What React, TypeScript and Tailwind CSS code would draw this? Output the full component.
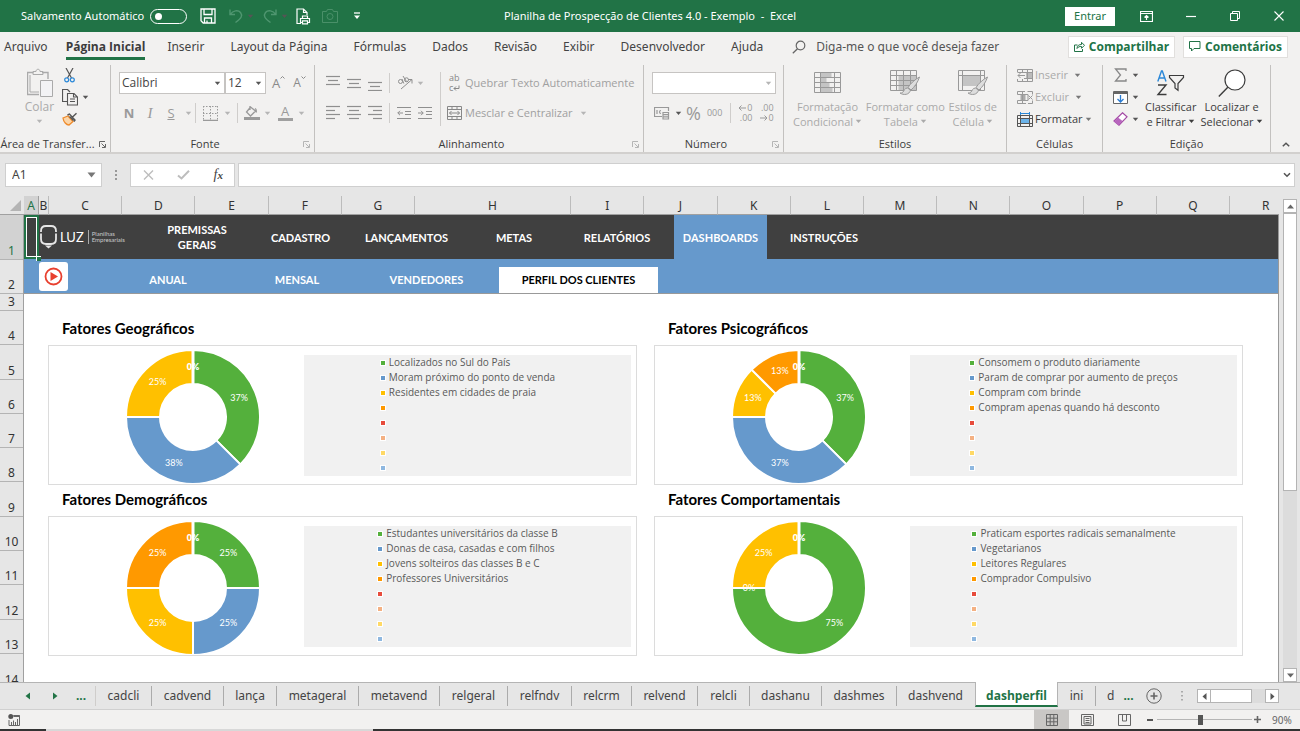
import React from 'react';

type Kids = { children?: React.ReactNode };

function Caret({ className = 'text-[#555]' }: { className?: string }) {
  return (
    <svg className={`shrink-0 ${className}`} width="7" height="5" viewBox="0 0 7 5" aria-hidden="true">
      <path d="M0.8 0.8h5.4L3.5 4z" fill="currentColor" />
    </svg>
  );
}

function Svg({ w, h, box, children, className = '' }: Kids & { w: number; h: number; box?: string; className?: string }) {
  return (
    <svg
      width={w}
      height={h}
      viewBox={box ?? `0 0 ${w} ${h}`}
      fill="none"
      stroke="currentColor"
      strokeWidth="1"
      className={`shrink-0 ${className}`}
      aria-hidden="true"
    >
      {children}
    </svg>
  );
}

/* ---------- title bar ---------- */

function TitleBar() {
  return (
    <header className="grid h-8 shrink-0 grid-cols-[1fr_auto_1fr] items-center bg-[#217346] text-white">
      <div className="flex items-center pl-[21px]">
        <label htmlFor="autosave" className="whitespace-nowrap text-[11px] leading-4">Salvamento Automático</label>
        <input id="autosave" type="checkbox" role="switch" className="peer sr-only" />
        <label htmlFor="autosave" className="ml-[6px] flex h-[15px] w-[37px] items-center rounded-full border border-white px-[4px]">
          <span className="size-[7px] rounded-full bg-white" />
        </label>
        <button aria-label="Salvar" className="ml-[13px]">
          <Svg w={16} h={16}>
            <path d="M1 1h14v14H3.2L1 12.8zM4 1v5.5h8V1M4.5 15v-5h7v5M7 12.5V15" strokeWidth="1.3" />
          </Svg>
        </button>
        <button aria-label="Desfazer" className="ml-[12px] flex items-center gap-[3px] text-[#4f9670]">
          <Svg w={16} h={16}>
            <path d="M2 1.5v5h5M2.3 6.3C5 2.5 10 1.6 12.5 4.5c2.6 3.3.6 6-5 10" strokeWidth="1.4" />
          </Svg>
          <Caret />
        </button>
        <button aria-label="Refazer" className="ml-[8px] flex items-center gap-[3px] text-[#4f9670]">
          <Svg w={16} h={16}>
            <path d="M14 1.5v5H9M13.7 6.3C11 2.5 6 1.6 3.5 4.5.9 7.8 2.900 10.500 8.500 14.500" strokeWidth="1.4" />
          </Svg>
          <Caret />
        </button>
        <button aria-label="Visualizar impressão" className="ml-[8px]">
          <Svg w={15} h={17}>
            <path d="M5 15.500H1V1h6.500L11 4.500V7M7.500 1v3.500H11" strokeWidth="1.2" />
            <path d="M6.500 10.500V8h5v2.500M6 14.500H4.500v-4h9v4H12M6.500 12.800h5v3h-5z" strokeWidth="1.2" />
          </Svg>
        </button>
        <button aria-label="Câmera" className="ml-[11px] text-[#4a9069]">
          <Svg w={16} h={14}>
            <path d="M.500 2.500h4l1-2h5l1 2h4v11H.500z" />
            <circle cx="8" cy="7.500" r="3" />
          </Svg>
        </button>
        <button aria-label="Personalizar barra" className="ml-[15px]">
          <Svg w={8} h={8}><path d="M1 1h6" strokeWidth="1.3" /><path d="M1 3.500h6L4 7z" fill="currentColor" stroke="none" /></Svg>
        </button>
      </div>
      <h1 className="whitespace-pre text-[11px] leading-4">Planilha de Prospecção de Clientes 4.0 - Exemplo  -  Excel</h1>
      <div className="flex items-center justify-end pr-[16px]">
        <button className="h-[19px] w-[50px] bg-white text-[11px] leading-4 text-[#217346]">Entrar</button>
        <button aria-label="Opções da faixa" className="ml-[25px]">
          <Svg w={13} h={11}><path d="M.500.500h12v10H.500zM.500 2.500h12M6.500 9V4.500M4.500 6.500l2-2 2 2" strokeWidth="1.2" /></Svg>
        </button>
        <button aria-label="Minimizar" className="ml-[33px]"><Svg w={10} h={10}><path d="M0 5.500h10" strokeWidth="1.2" /></Svg></button>
        <button aria-label="Restaurar" className="ml-[34px]"><Svg w={10} h={10}><path d="M.500 2.500h7v7h-7zM2.500 2.500v-2h7v7h-2" /></Svg></button>
        <button aria-label="Fechar" className="ml-[34px]"><Svg w={10} h={10}><path d="M.500.500l9 9M9.500.500l-9 9" strokeWidth="1.1" /></Svg></button>
      </div>
    </header>
  );
}

/* ---------- ribbon tabs ---------- */

const menuTabs = ['Arquivo', 'Página Inicial', 'Inserir', 'Layout da Página', 'Fórmulas', 'Dados', 'Revisão', 'Exibir', 'Desenvolvedor', 'Ajuda'];

function MenuRow() {
  return (
    <div className="flex h-[29px] shrink-0 items-center justify-between pl-1 pr-3 text-[12px] leading-4 text-[#444]">
      <nav className="flex items-center gap-[26px] whitespace-nowrap">
        {menuTabs.map((t) =>
          t === 'Página Inicial' ? (
            <button key={t} className="-ml-2 -mr-1 mt-[5px] border-b-[3px] border-[#217346] pb-[2px] font-['Open_Sans',sans-serif] font-bold text-[#3c3c3c]">{t}</button>
          ) : (
            <button key={t}>{t}</button>
          ),
        )}
        <label className="ml-[3px] flex items-center gap-[10px]">
          <Svg w={14} h={14} className="text-[#666]"><circle cx="8.500" cy="5.500" r="4.300" strokeWidth="1.200" /><path d="M5.500 8.700L.800 13.200" strokeWidth="1.300" /></Svg>
          <input className="w-[190px] bg-transparent outline-none placeholder:text-[#555] placeholder:opacity-100" placeholder="Diga-me o que você deseja fazer" aria-label="Diga-me o que você deseja fazer" />
        </label>
      </nav>
      <div className="flex gap-2 font-['Open_Sans',sans-serif] font-bold text-[#217346]">
        <button className="flex h-[22px] w-[107px] items-center justify-center gap-[4px] border border-[#e1dfdd] bg-white">
          <Svg w={11} h={11}><path d="M3.500 4H.500v6.500h8V8M3 7.500c0-3 2-4 4.500-4V1.300l3 3-3 3V5.500C5.500 5.300 4 6 3 7.500z" /></Svg>
          Compartilhar
        </button>
        <button className="flex h-[22px] w-[105px] items-center justify-center gap-[4px] border border-[#e1dfdd] bg-white">
          <Svg w={12} h={11}><path d="M.500.500h10.500v7H5L2.500 10V7.500h-2z" /></Svg>
          Comentários
        </button>
      </div>
    </div>
  );
}

/* ---------- ribbon ---------- */

function Group({ label, width, launcher, faded, children }: Kids & { label: string; width: string; launcher?: boolean; faded?: boolean }) {
  return (
    <section className={`flex shrink-0 flex-col ${width}`} aria-label={label}>
      <div className="flex h-[87px] flex-col border-r border-[#c3c1bf]">
        <div className="h-[71px]">{children}</div>
        <div className={launcher ? 'flex items-center pr-1' : 'flex items-center'}>
          <span className="flex-1 whitespace-nowrap text-center text-[11px] leading-4 text-[#3c3c3c]">{label}</span>
          {launcher && (
            <button aria-label={`Mais opções: ${label}`} className={faded ? 'pl-1 text-[#b5b5b5]' : 'pl-1 text-[#666]'}>
              <Svg w={7} h={7}><path d="M.500 6V.500H6M2.500 2.500l3.500 3.500M6.500 3v3.500H3" /></Svg>
            </button>
          )}
        </div>
      </div>
    </section>
  );
}

function Sep({ className = 'h-[20px]' }: { className?: string }) {
  return <span className={`w-px shrink-0 bg-[#cfcdcb] ${className}`} />;
}

function Drop({ label, value, width, caret }: { label: string; value: string; width: string; caret?: string }) {
  return (
    <span className={`grid h-[22px] items-center border border-[#c6c4c2] bg-white ${width}`}>
      <select aria-label={label} className="col-start-1 row-start-1 h-5 appearance-none pl-[2px] text-[12px] leading-4 text-[#444] outline-none">
        <option>{value}</option>
      </select>
      <span className="pointer-events-none col-start-1 row-start-1 mr-[3px] justify-self-end"><Caret className={caret} /></span>
    </span>
  );
}

function Lines({ rows, name }: { rows: [number, number, number][]; name: string }) {
  return (
    <button aria-label={name}>
      <Svg w={14} h={16} className="text-[#8f8f8f]">
        {rows.map(([y, a, b]) => <path key={y} d={`M${a} ${y}.5H${b}`} strokeWidth="1.200" />)}
      </Svg>
    </button>
  );
}

function FontGroup() {
  return (
    <Group label="Fonte" width="w-[204px]" launcher faded>
      <div className="flex flex-col gap-[8px] pl-[8px] pt-[7px]">
        <div className="flex items-center">
          <Drop label="Fonte" value="Calibri" width="w-[106px]" />
          <Drop label="Tamanho" value="12" width="w-[41px]" />
          <button aria-label="Aumentar fonte" className="ml-[6px] flex items-start text-[13px] leading-4 text-[#8a8a8a]">A<Svg w={5} h={5}><path d="M.500 3.500l2-2 2 2" /></Svg></button>
          <button aria-label="Diminuir fonte" className="ml-[8px] flex items-start text-[12px] leading-4 text-[#8a8a8a]">A<Svg w={5} h={5}><path d="M.500 1.500l2 2 2-2" /></Svg></button>
        </div>
        <div className="flex h-[22px] items-center text-[#9a9a9a]">
          <button className="w-[20px] text-[13px] font-bold leading-4">N</button>
          <button className="w-[22px] font-['Liberation_Serif',serif] text-[15px] italic leading-4">I</button>
          <button className="w-[20px] text-[13px] leading-4 underline">S</button>
          <span className="w-[14px] pl-1"><Caret className="text-[#b5b5b5]" /></span>
          <Sep />
          <button aria-label="Bordas" className="ml-[7px]">
            <Svg w={15} h={15}><path d="M.500 0v14M7.500 0v14M14.500 0v14M0 .500h15M0 7.500h15" strokeDasharray="1.500 1.500" /><path d="M0 14.500h15" strokeWidth="1.500" /></Svg>
          </button>
          <span className="ml-[6px] mr-[6px]"><Caret className="text-[#b5b5b5]" /></span>
          <Sep />
          <button aria-label="Cor de preenchimento" className="ml-[6px]">
            <Svg w={16} h={16}><path d="M7 1.500L2.500 7l4 4 5-5L6.500 2M6 1v4M12.500 7.500c-.700-2 .500-3-1.500-4" strokeWidth="1.300" /><path d="M0 13.500h16" strokeWidth="3" /></Svg>
          </button>
          <span className="ml-[4px]"><Caret className="text-[#b5b5b5]" /></span>
          <button aria-label="Cor da fonte" className="ml-[6px] flex w-[16px] flex-col items-center">
            <span className="text-[13px] leading-[13px]">A</span>
            <span className="h-[3px] w-[15px] bg-[#a0a0a0]" />
          </button>
          <span className="ml-[5px]"><Caret className="text-[#b5b5b5]" /></span>
        </div>
      </div>
    </Group>
  );
}

function AlignGroup() {
  return (
    <Group label="Alinhamento" width="w-[329px]" launcher faded>
      <div className="flex pt-[7px]">
        <div className="flex flex-col gap-[8px] pl-[11px] text-[#8f8f8f]">
          <div className="flex h-[22px] items-center gap-[7px]">
            <Lines name="Alinhar em cima" rows={[[1, 0, 14], [5, 2, 12], [9, 0, 14]]} />
            <Lines name="Alinhar no meio" rows={[[4, 0, 14], [8, 2, 12], [12, 0, 14]]} />
            <Lines name="Alinhar embaixo" rows={[[7, 0, 14], [11, 2, 12], [15, 0, 14]]} />
            <Sep />
            <button aria-label="Orientação" className="flex items-center gap-[3px]">
              <svg width="17" height="16" viewBox="0 0 17 16" fill="none" stroke="currentColor" aria-hidden="true">
                <circle cx="3.500" cy="6.500" r="2" /><path d="M5 4l1.800 4.500M6 1l3.500 5.500M4 14L15 4.500M11 4.500h4v4" /><circle cx="9.500" cy="4.800" r="2" />
              </svg>
              <Caret className="text-[#b5b5b5]" />
            </button>
          </div>
          <div className="flex h-[22px] items-center gap-[7px]">
            <Lines name="Alinhar à esquerda" rows={[[1, 0, 14], [5, 0, 9], [9, 0, 14], [13, 0, 9]]} />
            <Lines name="Centralizar" rows={[[1, 0, 14], [5, 2, 12], [9, 0, 14], [13, 2, 12]]} />
            <Lines name="Alinhar à direita" rows={[[1, 0, 14], [5, 5, 14], [9, 0, 14], [13, 5, 14]]} />
            <Sep />
            <button aria-label="Diminuir recuo"><Svg w={14} h={14}><path d="M0 1.500h14M8 5.500h6M8 8.500h6M0 12.500h14M6 7H.800M3 4.800L.800 7 3 9.200" /></Svg></button>
            <button aria-label="Aumentar recuo"><Svg w={14} h={14}><path d="M0 1.500h14M8 5.500h6M8 8.500h6M0 12.500h14M0 7h5.200M3 4.800L5.200 7 3 9.200" /></Svg></button>
          </div>
        </div>
        <Sep className="ml-[8px] h-[54px]" />
        <div className="flex flex-col gap-[8px] pl-[6px] text-[11px] leading-4 text-[#a0a0a0]">
          <button className="flex h-[22px] items-center gap-[2px] whitespace-nowrap">
            <span className="flex w-[16px] flex-col pl-[2px] text-left text-[9px] leading-[10px] text-[#888]">
              <span>ab</span>
              <span className="flex items-center">c<Svg w={7} h={6}><path d="M6 .500v3H1M3 1.500l-2 2 2 2" /></Svg></span>
            </span>
            Quebrar Texto Automaticamente
          </button>
          <button className="flex h-[22px] items-center gap-[3px] whitespace-nowrap">
            <Svg w={15} h={14} className="text-[#888]"><path d="M.500.500h14v13H.500zM.500 3.500h14M.500 10.500h14M5 .500v3M10 .500v3M5 10.500v3M10 10.500v3M2.500 7h10M4.500 5l-2 2 2 2M10.500 5l2 2-2 2" /></Svg>
            Mesclar e Centralizar
            <span className="ml-[4px]"><Caret className="text-[#b5b5b5]" /></span>
          </button>
        </div>
      </div>
    </Group>
  );
}

function NumberGroup() {
  return (
    <Group label="Número" width="w-[140px]" launcher faded>
      <div className="flex flex-col gap-[8px] pl-[8px] pr-[7px] pt-[7px]">
        <Drop label="Formato de número" value="" width="w-full" caret="text-[#b5b5b5]" />
        <div className="flex h-[22px] items-center text-[#999]">
          <button aria-label="Formato de contabilização" className="ml-[2px] flex items-center gap-[5px]">
            <Svg w={16} h={13}><path d="M8 9.500H.500V.500h14V4M3 3v4M7 3.500a1.500 1.500 0 100 3M9 5.500h5.500v6.500H9zM9 7.700h5.500M9 9.800h5.500" strokeWidth="1.200" /></Svg>
            <Caret />
          </button>
          <button className="ml-[4px] text-[18px] leading-5">%</button>
          <button className="ml-[6px] text-[9px] leading-4">000</button>
          <span className="ml-[8px]"><Sep className="block h-[20px]" /></span>
          <button aria-label="Aumentar casas decimais" className="ml-[7px] flex flex-col items-end text-[9px] leading-[10px]">
            <span className="flex items-center gap-px"><Svg w={8} h={6}><path d="M8 3H1M3.500.500L1 3l2.500 2.500" /></Svg>0</span>
            <span>.00</span>
          </button>
          <button aria-label="Diminuir casas decimais" className="ml-[7px] flex flex-col items-end text-[9px] leading-[10px]">
            <span>.00</span>
            <span className="flex items-center gap-px"><Svg w={8} h={6}><path d="M0 3h7M4.500.500L7 3 4.500 5.500" /></Svg>0</span>
          </button>
        </div>
      </div>
    </Group>
  );
}

function BigButton({ icon, a, b, tone }: { icon: React.ReactNode; a: string; b: string; tone: string }) {
  return (
    <button className={`flex flex-col items-center whitespace-nowrap text-[11px] leading-[15px] ${tone}`}>
      <span className="flex h-[32px] items-center">{icon}</span>
      <span>{a}</span>
      <span className="flex items-center gap-[2px]">{b}<Caret className="text-current" /></span>
    </button>
  );
}

const gridPath = 'M.500.500h26v20H.500zM.500 5.500h26M.500 10.500h26M.500 15.500h26M6.500.500v20M20.500.500v20';
const brushPath = 'M29.500 7c-4 2-9 6.500-11.500 10.500l3 2.500c3.500-3 7-8 8.500-13zM17.500 18c-3 0-3.500 3-4.500 4-1 1-2 1-3 1 3.500 2.500 9.500 2 10.500-3z';

function StylesGroup() {
  return (
    <Group label="Estilos" width="w-[223px]">
      <div className="flex justify-between pl-[9px] pr-[9px] pt-[2px]">
        <BigButton tone="text-[#aaa]" a="Formatação" b="Condicional" icon={<Svg w={27} h={26} box="0 -2 27 26" className="text-[#999]"><path d="M6.500.500h11v5h-11zM6.500 10.500h9v5h-9z M6.500 5.500h6v5h-6zM6.500 15.500h12v5h-12z" fill="#c4c4c4" stroke="none" /><path d={gridPath} /></Svg>} />
        <BigButton tone="text-[#aaa]" a="Formatar como" b="Tabela" icon={<Svg w={30} h={26} className="text-[#999]"><path d="M8.500 5.500h18v15h-18z" fill="#c4c4c4" stroke="none" /><path d={gridPath} /><path d="M13.500.500v20" /><path d={brushPath} fill="#ddd" /></Svg>} />
        <BigButton tone="text-[#aaa]" a="Estilos de" b="Célula" icon={<Svg w={30} h={26} className="text-[#999]"><path d="M.500.500h26v20H.500zM.500 5.500h26M4.500.500v20M22.500.500v20" /><path d="M5 6h17v10H5z" fill="#c4c4c4" stroke="none" /><path d={brushPath} fill="#ddd" /></Svg>} />
      </div>
    </Group>
  );
}

function CellIcon({ kind }: { kind: 'in' | 'ex' | 'fm' }) {
  return (
    <Svg w={16} h={15} className={kind === 'fm' ? 'text-[#555]' : 'text-[#999]'}>
      {kind === 'in' && <><path d="M9 4.500h6v6H9z" fill="#bbb" stroke="none" /><path d="M.500 4V1.500h15v12H.500V11M5.500 1v3M10.500 1v12M.500 4.500h15M7 10.500h8.500M5.500 11v2.500M8 7.500H1M3.500 5L1 7.500 3.500 10" /></>}
      {kind === 'ex' && <><path d="M3.500 4.500h5v6h-5z" fill="#aaa" stroke="none" /><path d="M8 1.500H.500v3H11v6H.500v3H9M5.500 1.500v12M10.500 1.500h5v3M11 13.500h4.500v-3M11.500 5.500l4 4M15.500 5.500l-4 4" /></>}
      {kind === 'fm' && <><path d="M3.500 0v3M12.500 0v3M3.500 1.500h9" stroke="#2b88d8" /><path d="M4 7h8v5H4z" fill="#6cb4ea" stroke="none" /><path d="M.500 3.500h15v11H.500zM.500 6.500h15M.500 11.500h15M3.500 3.500v11M12.500 3.500v11" /></>}
    </Svg>
  );
}

function CellsGroup() {
  return (
    <Group label="Células" width="w-[96px]">
      <div className="flex flex-col gap-[6px] pl-[10px] pt-[2px] text-[11px] leading-4">
        <button className="flex items-center gap-[2px] text-[#aaa]"><CellIcon kind="in" />Inserir<span className="ml-[4px]"><Caret className="text-[#777]" /></span></button>
        <button className="flex items-center gap-[2px] text-[#aaa]"><CellIcon kind="ex" />Excluir<span className="ml-[4px]"><Caret className="text-[#777]" /></span></button>
        <button className="flex items-center gap-[2px] text-[#3c3c3c]"><CellIcon kind="fm" />Formatar<Caret className="text-[#777]" /></button>
      </div>
    </Group>
  );
}

function EditGroup() {
  return (
    <Group label="Edição" width="w-[168px]">
      <div className="flex pl-[10px] pt-[2px]">
        <div className="flex flex-col gap-[6px] text-[#666]">
          <button aria-label="Soma" className="flex h-4 items-center gap-[4px]"><Svg w={15} h={14} className="text-[#888]"><path d="M13 3V1H2.500l5 6-5 6H13v-2" strokeWidth="1.300" /></Svg><Caret /></button>
          <button aria-label="Preencher" className="flex h-4 items-center gap-[4px]"><Svg w={15} h={13}><path d="M.500.500h14v12H.500z" fill="#fff" /><path d="M.500 2h14" strokeWidth="2" /><path d="M7.500 4v6.500M4.500 8l3 3 3-3" stroke="#2b7cd3" strokeWidth="1.300" /></Svg><Caret /></button>
          <button aria-label="Limpar" className="flex h-4 items-center gap-[4px]"><Svg w={15} h={14}><path d="M9.500.800l4.500 4-8 8.400-5-4.200z" fill="#fff" stroke="#a349a4" strokeWidth="1.200" /><path d="M5 5.500L1 9.500l4.500 3.700 4-4.300z" fill="#b765bd" stroke="none" /></Svg><Caret /></button>
        </div>
        <div className="ml-[6px] flex gap-[4px]">
          <BigButton tone="text-[#3c3c3c]" a="Classificar" b="e Filtrar" icon={
            <span className="flex items-center">
              <Svg w={12} h={28}><path d="M1.800 12.500L5.500 2h.800L10 12.500M3.200 9h5.400" stroke="#2b88d8" strokeWidth="1.400" /><path d="M2 16h8L2 25.500h8.500" strokeWidth="1.400" /></Svg>
              <Svg w={17} h={18}><path d="M1.500 1.500h14v2L10 9.500v6.800L7 14V9.500l-5.500-6z" strokeWidth="1.200" /></Svg>
            </span>
          } />
          <BigButton tone="text-[#3c3c3c]" a="Localizar e" b="Selecionar" icon={<Svg w={28} h={29}><circle cx="17" cy="11" r="10" fill="#fff" strokeWidth="1.200" /><path d="M9.800 18.200L.800 27.500" strokeWidth="1.400" /></Svg>} />
        </div>
      </div>
    </Group>
  );
}

function Ribbon() {
  return (
    <div className="flex h-[91px] shrink-0 items-start pt-[4px] font-['Open_Sans',sans-serif]">
      <Group label="Área de Transfer..." width="w-[111px]" launcher>
        <div className="flex pl-[25px] pt-[3px]">
          <button className="flex w-[29px] flex-col items-center text-[12px] leading-4 text-[#aaa]">
            <Svg w={26} h={30} className="text-[#aaa]"><path d="M12 26.500H.500V4.500h6M15 4.500h6V11" strokeWidth="1.400" /><path d="M6 6.500v-3h3c0-3 4-3 4 0h3v3zM3 7v17h9" /><path d="M13.500 12.500h12v16h-12z" fill="#f3f3f5" /></Svg>
            <span className="mt-px">Colar</span>
            <span className="mt-[4px]"><Caret className="text-[#b5b5b5]" /></span>
          </button>
          <div className="ml-[8px] flex flex-col gap-[6px] text-[#555]">
            <button aria-label="Recortar" className="pl-[2px]"><Svg w={11} h={15}><path d="M2 0l5.500 10M9 0L3.500 10" strokeWidth="1.200" /><circle cx="2.700" cy="11.800" r="2" stroke="#2b88d8" strokeWidth="1.200" /><circle cx="8.300" cy="11.800" r="2" stroke="#2b88d8" strokeWidth="1.200" /></Svg></button>
            <button aria-label="Copiar" className="flex items-center gap-[4px]"><Svg w={16} h={17}><path d="M5 12.500H.500V.500h5L8 3" strokeWidth="1.200" /><path d="M5.500 4.500H12l3.500 3.500v8h-10zM11.500 4.500V8h4M8 10h5M8 12.500h5" strokeWidth="1.100" /></Svg><Caret /></button>
            <button aria-label="Pincel de formatação"><Svg w={16} h={14}><path d="M1 6l5-2 5 5.500L7 13C4.500 13 1.500 10 1 6z" fill="#fbd5a8" stroke="#ef8b2c" strokeWidth="1.300" /><path d="M7.500 4.500l4 4M9.500 6L14.500 1.300M5.500 3l2-1 5.500 6-1 1.500" strokeWidth="1.400" /></Svg></button>
          </div>
        </div>
      </Group>
      <FontGroup />
      <AlignGroup />
      <NumberGroup />
      <StylesGroup />
      <CellsGroup />
      <EditGroup />
      <button aria-label="Recolher faixa" className="mx-auto self-end pb-[5px] text-[#555]"><Svg w={8} h={5}><path d="M.800 4.300L4 1.200l3.200 3.100" strokeWidth="1.500" /></Svg></button>
    </div>
  );
}

function FormulaBar() {
  return (
    <div className="flex h-[44px] shrink-0 items-center border-t-2 border-[#d2d0ce] pb-[2px] pl-[5px] pr-[5px] pt-px">
      <label className="flex h-[24px] w-[97px] items-center border border-[#cfcfcf] bg-white pl-[6px] pr-[5px]">
        <input aria-label="Caixa de nome" defaultValue="A1" className="w-0 flex-1 text-[12px] leading-4 text-[#444] outline-none" />
        <svg width="9" height="6" viewBox="0 0 9 6" aria-hidden="true"><path d="M.500.500h8L4.500 5.500z" fill="#777" /></svg>
      </label>
      <svg className="mx-[12px]" width="4" height="12" viewBox="0 0 4 12" fill="#999" aria-hidden="true"><path d="M1 1h2v2H1zM1 5h2v2H1zM1 9h2v2H1z" /></svg>
      <div className="flex h-[24px] w-[105px] items-center justify-between border border-[#cfcfcf] bg-white pl-[12px] pr-[11px]">
        <button aria-label="Cancelar"><Svg w={11} h={10} className="text-[#bdbdbd]"><path d="M1 .500l9 9M10 .500l-9 9" strokeWidth="1.400" /></Svg></button>
        <button aria-label="Confirmar"><Svg w={13} h={10} className="text-[#bdbdbd]"><path d="M1 5.500l3.500 3L12 .800" strokeWidth="2" /></Svg></button>
        <button className="font-['Liberation_Serif',serif] text-[14px] italic leading-4 text-[#444]">f<span className="text-[11px] font-bold">x</span></button>
      </div>
      <label className="ml-[3px] flex h-[24px] flex-1 items-center border border-[#cfcfcf] bg-white pr-[3px]">
        <input aria-label="Barra de fórmulas" className="w-0 flex-1 outline-none" />
        <Svg w={8} h={6} className="text-[#555]"><path d="M1 1.200l3 3 3-3" strokeWidth="1.600" /></Svg>
      </label>
    </div>
  );
}

/* ---------- sheet ---------- */

const GREEN = '#54b03c';
const BLUE = '#6699cc';
const YELLOW = '#ffc000';
const ORANGE = '#ff9900';
const markerColors = ['bg-[#54b03c]', 'bg-[#6699cc]', 'bg-[#ffc000]', 'bg-[#ff9900]', 'bg-[#e74c3c]', 'bg-[#f4b183]', 'bg-[#ffd966]', 'bg-[#8fb8e0]'];

type Slice = { v: number; color: string; label: string };
type Chart = { title: string; slices: Slice[]; legend: string[] };

const charts: Chart[] = [
  {
    title: 'Fatores Geográficos',
    slices: [
      { v: 37.5, color: GREEN, label: '37%' },
      { v: 37.5, color: BLUE, label: '38%' },
      { v: 25, color: YELLOW, label: '25%' },
    ],
    legend: ['Localizados no Sul do País', 'Moram próximo do ponto de venda', 'Residentes em cidades de praia'],
  },
  {
    title: 'Fatores Psicográficos',
    slices: [
      { v: 37.5, color: GREEN, label: '37%' },
      { v: 37.5, color: BLUE, label: '37%' },
      { v: 12.5, color: YELLOW, label: '13%' },
      { v: 12.5, color: ORANGE, label: '13%' },
    ],
    legend: ['Consomem o produto diariamente', 'Param de comprar por aumento de preços', 'Compram com brinde', 'Compram apenas quando há desconto'],
  },
  {
    title: 'Fatores Demográficos',
    slices: [
      { v: 25, color: GREEN, label: '25%' },
      { v: 25, color: BLUE, label: '25%' },
      { v: 25, color: YELLOW, label: '25%' },
      { v: 25, color: ORANGE, label: '25%' },
    ],
    legend: ['Estudantes universitários da classe B', 'Donas de casa, casadas e com filhos', 'Jovens solteiros das classes B e C', 'Professores Universitários'],
  },
  {
    title: 'Fatores Comportamentais',
    slices: [
      { v: 75, color: GREEN, label: '75%' },
      { v: 0, color: BLUE, label: '0%' },
      { v: 25, color: YELLOW, label: '25%' },
    ],
    legend: ['Praticam esportes radicais semanalmente', 'Vegetarianos', 'Leitores Regulares', 'Comprador Compulsivo'],
  },
];

function Donut({ slices }: { slices: Slice[] }) {
  const C = 67;
  const R = 67;
  const r = 33;
  const at = (pct: number, rad: number) => {
    const a = (pct / 100) * 2 * Math.PI;
    return [C + rad * Math.sin(a), C - rad * Math.cos(a)];
  };
  let start = 0;
  const parts = slices.map((s) => {
    const from = start;
    start += s.v;
    return { ...s, from, to: start };
  });
  return (
    <svg width="134" height="134" viewBox="0 0 134 134" role="img" className="shrink-0 self-end">
      {parts.map((p, i) => {
        const [x1, y1] = at(p.from, R);
        const [x2, y2] = at(p.to, R);
        const [x3, y3] = at(p.to, r);
        const [x4, y4] = at(p.from, r);
        const big = p.v > 50 ? 1 : 0;
        return (
          <path
            key={i}
            d={`M${x1} ${y1}A${R} ${R} 0 ${big} 1 ${x2} ${y2}L${x3} ${y3}A${r} ${r} 0 ${big} 0 ${x4} ${y4}Z`}
            fill={p.color}
            stroke="#fff"
            strokeWidth="2"
            strokeLinejoin="round"
          />
        );
      })}
      <path d={`M${C} 0V${C - r}`} stroke="#fff" strokeWidth="3" />
      <g fill="#fff" fontSize="9" textAnchor="middle">
        {parts.map((p, i) => {
          const [x, y] = at((p.from + p.to) / 2, 50);
          return <text key={i} x={x} y={y + 3}>{p.label}</text>;
        })}
        <text x={C} y={C - 47} fontWeight="800">0%</text>
      </g>
    </svg>
  );
}

function ChartPanel({ chart }: { chart: Chart }) {
  return (
    <section>
      <h2 className="flex h-[31px] items-center pb-[4px] pl-[14px] font-['Lato',sans-serif] text-[15px] font-bold leading-5 text-black">{chart.title}</h2>
      <div className="flex h-[140px] items-center border border-[#dcdcdc] bg-white pl-[77px] pr-[5px]">
        <Donut slices={chart.slices} />
        <div className="flex-1 pl-[44px]">
          <ul className="flex h-[121px] flex-col items-center justify-center bg-[#f1f1f1] font-['Open_Sans',sans-serif] text-[10px] leading-[15px] text-[#595959]">
            <li>
              {markerColors.map((c, i) => (
                <div key={c} className="flex h-[15px] items-center gap-[3px] whitespace-nowrap">
                  <span className="bg-white p-px"><span className={`block size-[4px] ${c}`} /></span>
                  {chart.legend[i]}
                </div>
              ))}
            </li>
          </ul>
        </div>
      </div>
    </section>
  );
}

const columns = 'ABCDEFGHIJKLMNOPQ'.split('');
const navClass = 'flex h-full items-center justify-center text-center font-bold leading-[15px]';

function Sheet() {
  return (
    <main className="flex min-h-0 flex-1">
      <div className="flex min-h-0 min-w-0 flex-1 flex-col overflow-hidden">
        <div className="flex h-[19px] shrink-0 font-['Noto_Sans',sans-serif] text-[12px] leading-4 text-[#333]">
          <div className="flex w-[24px] items-end justify-end border-b border-[#a0a0a0] pb-[3px] pr-[3px]">
            <svg width="11" height="11" viewBox="0 0 11 11" aria-hidden="true"><path d="M11 0v11H0z" fill="#b4b4b4" /></svg>
          </div>
          <div className="grid flex-1 grid-cols-[15px_10px_repeat(5,1fr)_156px_repeat(9,1fr)_49px]">
            {columns.map((c) => (
              <span key={c} className={c === 'A' ? 'flex items-center justify-center border-b border-r border-[#a0a0a0] bg-[#d2d2d2] pt-[2px] text-[#217346]' : 'flex items-center justify-center border-b border-r border-[#a0a0a0] border-r-[#bcbcbc] pt-[2px]'}>{c}</span>
            ))}
            <span className="overflow-hidden border-b border-[#a0a0a0] pl-[32px] pt-[2px]">R</span>
          </div>
        </div>
        <div className="flex min-h-0 flex-1">
          <div className="flex w-[24px] shrink-0 flex-col overflow-hidden border-r border-[#a0a0a0] font-['Noto_Sans',sans-serif] text-[12px] leading-4 text-[#333]">
            <span className="flex h-[45px] shrink-0 items-end justify-center border-b border-[#b4b4b4] bg-[#d2d2d2] text-[#217346]">1</span>
            <span className="flex h-[34px] shrink-0 items-end justify-center border-b border-[#b4b4b4]">2</span>
            <span className="flex h-[17px] shrink-0 items-end justify-center border-b border-[#b4b4b4]">3</span>
            <div className="flex h-[343px] shrink-0 flex-col">
              {[4, 5, 6, 7, 8, 9, 10, 11, 12, 13].map((n) => (
                <span key={n} className="flex flex-1 items-end justify-center border-b border-[#b4b4b4]">{n}</span>
              ))}
            </div>
            <span className="flex h-[34px] shrink-0 items-end justify-center">14</span>
          </div>
          <div className="min-w-0 flex-1 overflow-hidden border-r border-[#999] bg-white font-['Lato','Open_Sans',sans-serif] text-[11px]">
            <nav className="relative flex h-[44px] items-center bg-[#404040] text-white">
              <span className="absolute inset-y-0 left-0 z-10 w-[15px] border-2 border-[#217346] outline outline-1 -outline-offset-[3px] outline-white" />
              <span className="absolute -bottom-[2px] left-[12px] z-10 size-[5px] border-l border-t border-white bg-[#217346]" />
              <div className="flex w-[121px] items-center pl-[16px]">
                <svg width="17" height="24" viewBox="0 0 17 24" fill="none" stroke="#e6e6e6" strokeWidth="1.800" aria-hidden="true">
                  <path d="M1 7V6c0-3.500 1.500-5 5-5h5c3.500 0 5 1.500 5 5v1M1 8.500V14c0 3.500 1.500 5 5 5h5c3.500 0 5-1.500 5-5V8.500" /><path d="M5 20.500h7l-3.500 3z" fill="#e6e6e6" stroke="none" />
                </svg>
                <span className="ml-[3px] text-[13px] leading-4">LUZ</span>
                <span className="ml-[4px] h-[14px] w-px bg-[#aaa]" />
                <span className="ml-[3px] text-[6px] leading-[6px] text-[#ccc]">Planilhas<br />Empresariais</span>
              </div>
              <a href="#premissas" className={`w-[104px] px-4 ${navClass}`}>PREMISSAS GERAIS</a>
              <a href="#cadastro" className={`w-[103px] ${navClass}`}>CADASTRO</a>
              <a href="#lancamentos" className={`w-[109px] ${navClass}`}>LANÇAMENTOS</a>
              <a href="#metas" className={`w-[106px] ${navClass}`}>METAS</a>
              <a href="#relatorios" className={`mr-[7px] w-[100px] ${navClass}`}>RELATÓRIOS</a>
              <a href="#dashboards" className={`w-[93px] bg-[#6699cc] ${navClass}`}>DASHBOARDS</a>
              <a href="#instrucoes" className={`w-[114px] ${navClass}`}>INSTRUÇÕES</a>
            </nav>
            <nav className="flex h-[35px] items-end border-b border-[#999] bg-[#6699cc] text-white">
              <div className="w-[80px] self-center pl-[15px]">
                <button aria-label="Assistir vídeo" className="flex size-[29px] items-center justify-center rounded-[3px] bg-white">
                  <svg width="19" height="19" viewBox="0 0 19 19" aria-hidden="true"><circle cx="9.500" cy="9.500" r="8" fill="none" stroke="#e8402f" strokeWidth="1.800" /><path d="M6.500 5v9l7.500-4.500z" fill="#e8402f" /></svg>
                </button>
              </div>
              <a href="#anual" className="flex h-[26px] w-[128px] items-center justify-center font-bold">ANUAL</a>
              <a href="#mensal" className="flex h-[26px] w-[130px] items-center justify-center font-bold">MENSAL</a>
              <a href="#vendedores" className="mr-[8px] flex h-[26px] w-[129px] items-center justify-center font-bold">VENDEDORES</a>
              <a href="#perfil" className="flex h-[26px] w-[159px] items-center justify-center bg-white font-bold text-black">PERFIL DOS CLIENTES</a>
            </nav>
            <div className="grid grid-cols-2 gap-x-[17px] pl-[24px] pr-[35px] pt-[20px]">
              {charts.map((c) => <ChartPanel key={c.title} chart={c} />)}
            </div>
          </div>
        </div>
      </div>
      <div className="flex w-[21px] shrink-0 flex-col items-center pl-px pt-[3px]">
        <button aria-label="Rolar para cima" className="flex h-[14px] w-[14px] items-center justify-center border border-[#b4b4b4] bg-white"><Svg w={7} h={5}><path d="M0 4.500h7L3.500.500z" fill="#666" stroke="none" /></Svg></button>
        <div className="h-[278px] w-[14px] border border-[#b4b4b4] bg-white" />
        <div className="w-[14px] flex-1 bg-[#dcdcdc]" />
        <button aria-label="Rolar para baixo" className="flex h-[14px] w-[14px] items-center justify-center border border-[#b4b4b4] bg-white"><Svg w={7} h={5}><path d="M0 .500h7L3.500 4.500z" fill="#666" stroke="none" /></Svg></button>
      </div>
    </main>
  );
}

const sheetTabs: [string, string][] = [
  ['cadcli', 'w-[56px]'], ['cadvend', 'w-[72px]'], ['lança', 'w-[53px]'], ['metageral', 'w-[82px]'], ['metavend', 'w-[81px]'],
  ['relgeral', 'w-[68px]'], ['relfndv', 'w-[64px]'], ['relcrm', 'w-[60px]'], ['relvend', 'w-[66px]'], ['relcli', 'w-[52px]'],
  ['dashanu', 'w-[72px]'], ['dashmes', 'w-[75px]'], ['dashvend', 'w-[78px]'], ['dashperfil', 'w-[83px]'], ['ini', 'w-[38px]'],
];

function SheetTabs() {
  return (
    <div className="flex h-[27px] shrink-0 items-center border-t border-[#b4b4b4] text-[12px] leading-4 text-[#444]">
      <div className="flex w-[95px] items-center">
        <button aria-label="Planilha anterior" className="ml-[25px]"><Svg w={5} h={8}><path d="M5 .500v7L.500 4z" fill="#217346" stroke="none" /></Svg></button>
        <button aria-label="Próxima planilha" className="ml-[23px]"><Svg w={5} h={8}><path d="M0 .500v7L4.500 4z" fill="#217346" stroke="none" /></Svg></button>
        <button className="ml-[18px] font-bold text-[#217346]">...</button>
      </div>
      <Sep className="h-[20px]" />
      {sheetTabs.map(([t, w]) =>
        t === 'dashperfil' ? (
          <button key={t} className={`-mt-px flex h-[25px] shrink-0 items-center justify-center self-start border-x border-b-2 border-x-[#b4b4b4] border-b-[#217346] bg-white pt-[4px] font-['Open_Sans',sans-serif] font-bold text-[#217346] ${w}`}>{t}</button>
        ) : (
          <button key={t} className={`h-[20px] shrink-0 border-r ${t === 'dashvend' ? 'border-transparent' : 'border-[#ababab]'} ${w}`}>{t}</button>
        ),
      )}
      <button className="ml-[11px]">d</button>
      <button className="ml-[9px] font-bold text-[#217346]">...</button>
      <button aria-label="Nova planilha" className="ml-[12px] text-[#666]"><Svg w={16} h={16}><circle cx="8" cy="8" r="7.200" /><path d="M8 4.500v7M4.500 8h7" strokeWidth="1.600" /></Svg></button>
      <svg className="ml-[18px]" width="4" height="12" viewBox="0 0 4 12" fill="#aaa" aria-hidden="true"><path d="M1 1h2v1.500H1zM1 5h2v1.500H1zM1 9h2v1.500H1z" /></svg>
      <div className="ml-auto mr-[21px] flex h-[14px] w-[82px] bg-[#dcdcdc]">
        <button aria-label="Rolar à esquerda" className="flex w-[14px] items-center justify-center border border-[#b4b4b4] bg-white"><Svg w={5} h={7}><path d="M4.500 0v7L.500 3.500z" fill="#555" stroke="none" /></Svg></button>
        <span className="w-[41px] border border-l-0 border-[#b4b4b4] bg-white" />
        <button aria-label="Rolar à direita" className="ml-auto flex w-[14px] items-center justify-center border border-[#b4b4b4] bg-white"><Svg w={5} h={7}><path d="M.500 0v7l4-3.500z" fill="#555" stroke="none" /></Svg></button>
      </div>
    </div>
  );
}

function StatusBar() {
  return (
    <footer className="flex h-[20px] shrink-0 items-center border-t border-[#d0d0d0] bg-[#f2f1f0] text-[#666]">
      <button aria-label="Gravar macro" className="ml-[8px] mr-auto">
        <Svg w={12} h={12}><path d="M5.500 1.500h6v10H1V6" /><path d="M5.500 2h6" strokeWidth="2" /><circle cx="2.800" cy="2.500" r="2.500" fill="#555" stroke="none" /><path d="M3.500 11V8M5.500 11V6.500M7.500 11V8M9.500 11V5" /></Svg>
      </button>
      <button aria-label="Normal" className="flex h-full w-[35px] items-center justify-center bg-[#c9c7c5]"><Svg w={12} h={12}><path d="M.500.500h11v11H.500zM.500 4.200h11M.500 7.800h11M4.200.500v11M7.800.500v11" /></Svg></button>
      <button aria-label="Layout da página" className="ml-[12px]"><Svg w={13} h={12}><path d="M.500.500h12v11H.500zM3 2.500h7v7.500H3zM4.500 4.500h4M4.500 6.500h4M4.500 8.500h4" /></Svg></button>
      <button aria-label="Quebra de página" className="ml-[24px]"><Svg w={13} h={12}><path d="M.500.500h12v11H.500zM4.500.500v6.500h4V.500" /></Svg></button>
      <span className="ml-[16px] h-[2px] w-[6px] bg-[#555]" />
      <label className="ml-[4px] grid w-[95px] items-center">
        <input type="range" aria-label="Zoom" defaultValue={45} className="sr-only" />
        <span className="col-start-1 row-start-1 h-px bg-[#b5b5b5]" />
        <span className="col-start-1 row-start-1 ml-[41px] h-[10px] w-[5px] bg-[#555]" />
      </label>
      <Svg w={7} h={7} className="ml-[2px]"><path d="M3.500 0v7M0 3.500h7" strokeWidth="1.600" /></Svg>
      <span className="w-[39px] pl-[11px] text-[10px] leading-4">90%</span>
    </footer>
  );
}

export default function App() {
  return (
    <div className="flex h-screen flex-col overflow-hidden bg-[#e6e6e6] font-['Noto_Sans','Open_Sans',sans-serif]">
      <TitleBar />
      <div className="shrink-0 bg-[#f2f1f0]">
        <MenuRow />
        <Ribbon />
      </div>
      <FormulaBar />
      <Sheet />
      <SheetTabs />
      <StatusBar />
      <div className="flex h-[2px] shrink-0 bg-[#333]"><span className="ml-[46px] w-[327px] bg-[#d8d8d8]" /></div>
    </div>
  );
}
